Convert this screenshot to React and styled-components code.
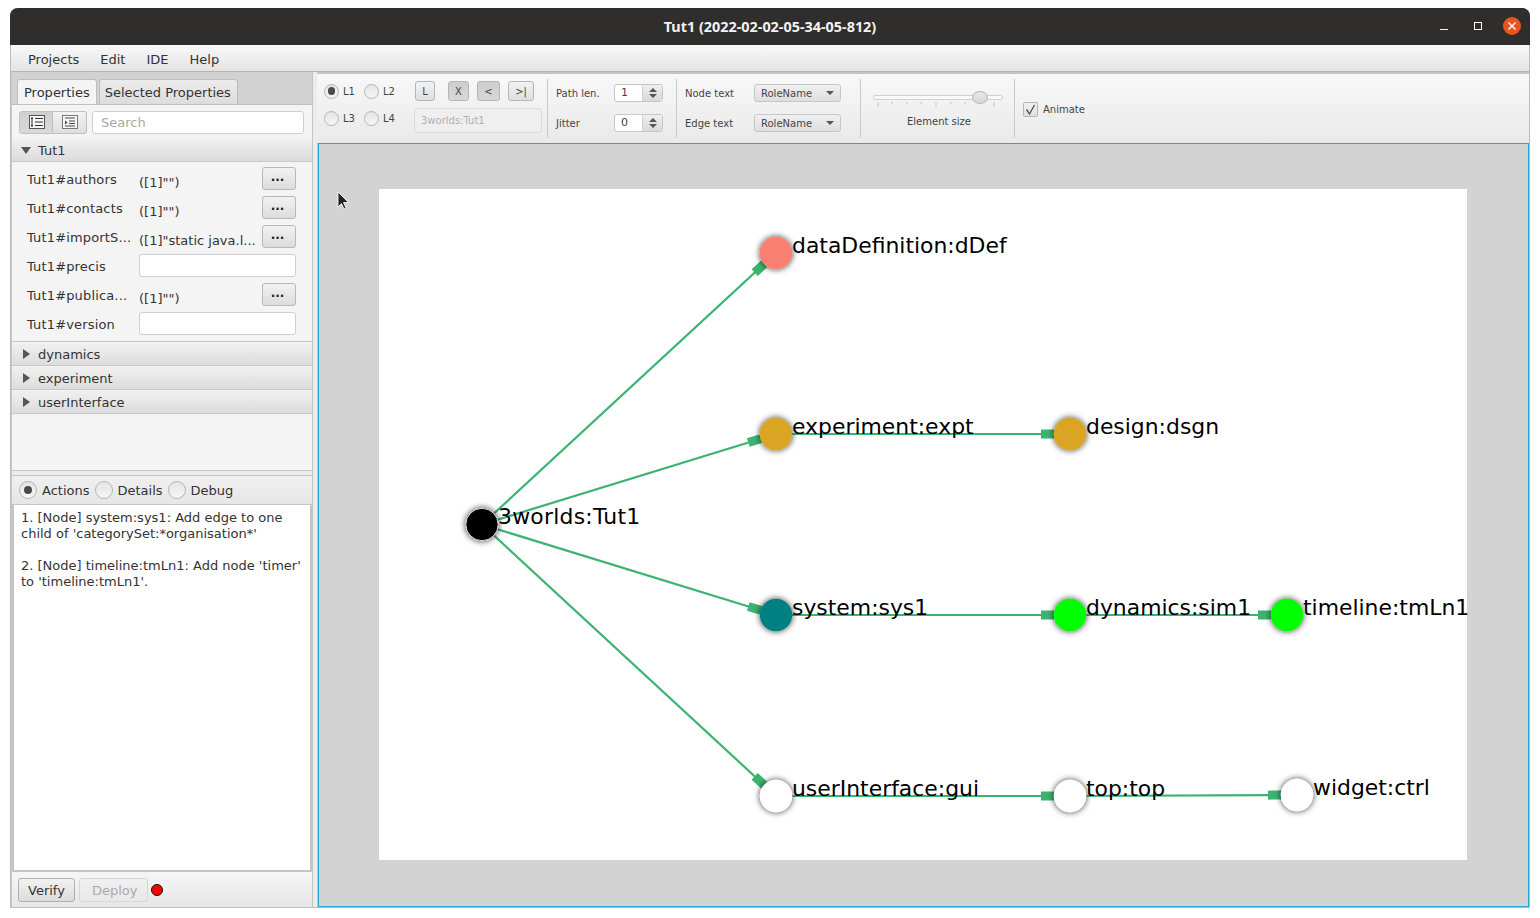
import React from 'react'
import styled, { createGlobalStyle } from 'styled-components'

const GlobalStyle = createGlobalStyle`
  html, body { margin: 0; padding: 0; background: #fff; }
  body { font-family: "DejaVu Sans", sans-serif; font-size: 13px; color: #333; }
`

const Page = styled.div`
  width: 1540px;
  height: 918px;
  padding: 8px 10px 10px;
  box-sizing: border-box;
  overflow: hidden;
`

const Win = styled.div`
  height: 900px;
  display: flex;
  flex-direction: column;
  border-radius: 8px 8px 0 0;
  background: #c8c8c8;
  overflow: hidden;
  box-shadow: inset 0 0 0 1px #bdbdbd;
`

const TitleBar = styled.div`
  height: 37px;
  flex: none;
  position: relative;
  background: #2f2e2d;
  color: #f2f2f2;
  display: flex;
  align-items: center;
  justify-content: center;
  font: 700 14.4px "Noto Sans", sans-serif;
`

const WinControls = styled.div`
  position: absolute;
  right: 9px;
  top: 9px;
  display: flex;
  align-items: center;
  gap: 16px;
`

const WinBtn = styled.span`
  width: 18px;
  height: 18px;
  display: flex;
  align-items: center;
  justify-content: center;
  border-radius: 50%;
  background: ${p => (p.$close ? '#e95420' : 'transparent')};
`

const MenuBar = styled.div`
  height: 27px;
  flex: none;
  margin: 0 1px;
  display: flex;
  align-items: center;
  padding: 2px 0 0 17px;
  gap: 21px;
  background: linear-gradient(#f8f8f8, #e4e4e4);
  border-bottom: 1px solid #b5b5b5;
  box-sizing: border-box;
`

const Body = styled.div`
  flex: 1;
  min-height: 0;
  margin: 0 1px 1px;
  display: flex;
`

const LeftPane = styled.div`
  width: 300px;
  margin-left: 1px;
  flex: none;
  display: flex;
  flex-direction: column;
  background: #f4f4f4;
`

const Divider = styled.div`
  width: 5px;
  flex: none;
  background: #ececec;
  border-left: 1px solid #c4c4c4;
  box-sizing: border-box;
`

const TabStrip = styled.div`
  height: 33px;
  flex: none;
  display: flex;
  align-items: flex-end;
  gap: 2px;
  padding-left: 5px;
  background: #d2d2d2;
  box-sizing: border-box;
  border-bottom: 1px solid #c0c0c0;
`

const Tab = styled.div`
  height: 25px;
  padding: 0 6px 0 ${p => (p.$active ? 6 : 5)}px;
  display: flex;
  align-items: center;
  border: 1px solid #bdbdbd;
  border-bottom: none;
  border-radius: 3px 3px 0 0;
  box-sizing: border-box;
  background: ${p => (p.$active ? '#f4f4f4' : 'linear-gradient(#ececec, #dcdcdc)')};
`

const SheetTools = styled.div`
  height: 34px;
  flex: none;
  display: flex;
  align-items: center;
  padding: 0 8px 0 7px;
  box-sizing: border-box;
`

const ToggleIcon = styled.div`
  width: 34px;
  height: 23px;
  padding-left: 1px;
  display: flex;
  align-items: center;
  justify-content: center;
  border: 1px solid #c0c0c0;
  box-sizing: border-box;
  background: ${p => (p.$on ? 'linear-gradient(#cfcfcf, #dadada)' : 'linear-gradient(#f2f2f2, #dedede)')};
  border-radius: ${p => (p.$on ? '3px 0 0 3px' : '0 3px 3px 0')};
  ${p => (p.$on ? '' : 'border-left: none;')}
`

const SearchBox = styled.div`
  flex: 1;
  height: 23px;
  margin-left: 5px;
  padding-left: 8px;
  display: flex;
  align-items: center;
  color: #a8a8a8;
  background: #fff;
  border: 1px solid #cfcfcf;
  border-radius: 3px;
  box-sizing: border-box;
`

const PaneHeader = styled.div`
  height: 22px;
  margin-bottom: 2px;
  flex: none;
  display: flex;
  align-items: center;
  gap: 9px;
  padding-left: 9px;
  box-sizing: border-box;
  background: linear-gradient(#f0f0f0, #dcdcdc);
  box-shadow: 0 1px 0 #c8c8c8;
`

const Triangle = styled.span`
  width: 0;
  height: 0;
  ${p => (p.$open
    ? 'border-left: 5px solid transparent; border-right: 5px solid transparent; border-top: 7px solid #555; margin-right: -2px;'
    : 'border-top: 5px solid transparent; border-bottom: 5px solid transparent; border-left: 7px solid #555; margin: 0 -1px 0 2px;')}
`

const PropRows = styled.div`
  flex: none;
  height: 179px;
  box-sizing: border-box;
  padding: 4px 16px 0 15px;
  margin-bottom: 1px;
  display: flex;
  flex-direction: column;
  gap: 6px;
  border-bottom: 1px solid #c6c6c6;
`

const PropRow = styled.div`
  height: 23px;
  flex: none;
  display: grid;
  grid-template-columns: 112px 1fr 34px;
  align-items: center;
`

const PropName = styled.span`
  position: relative;
  top: 1px;
  white-space: nowrap;
  letter-spacing: 0.15px;
`

const PropValue = styled.span`
  position: relative;
  top: 4px;
  white-space: nowrap;
`

const DotsButton = styled.div`
  width: 34px;
  height: 23px;
  display: flex;
  align-items: center;
  justify-content: center;
  padding: 0 3px 4px 0;
  box-sizing: border-box;
  font-weight: 700;
  font-size: 12px;
  color: #222;
  border: 1px solid #b8b8b8;
  border-radius: 3px;
  background: linear-gradient(#f2f2f2, #dcdcdc);
`

const BlankField = styled.div`
  grid-column: 2 / 4;
  height: 23px;
  background: #fff;
  border: 1px solid #cfcfcf;
  border-radius: 3px;
  box-sizing: border-box;
`

const Spare = styled.div`
  flex: 1;
  min-height: 0;
  border-bottom: 1px solid #c6c6c6;
`

const HSplit = styled.div`
  height: 5px;
  flex: none;
  background: #ececec;
  border-bottom: 1px solid #c6c6c6;
  box-sizing: border-box;
`

const ModeBar = styled.div`
  height: 28px;
  flex: none;
  display: flex;
  align-items: center;
  padding-left: 7px;
  box-sizing: border-box;
  background: linear-gradient(#f0f0f0, #e6e6e6);
`

const Radio = styled.span`
  flex: none;
  width: ${p => p.$size || 15}px;
  height: ${p => p.$size || 15}px;
  border-radius: 50%;
  border: 1px solid #b5b5b5;
  box-sizing: border-box;
  display: flex;
  align-items: center;
  justify-content: center;
  background: linear-gradient(#e4e4e4, #f6f6f6);
  &::after {
    content: '';
    display: ${p => (p.$on ? 'block' : 'none')};
    width: 55%;
    height: 55%;
    border-radius: 50%;
    background: #4a4a4a;
  }
`

const ModeOption = styled.label`
  display: flex;
  align-items: center;
  gap: 5px;
  margin-right: 5px;
`

const LogArea = styled.div`
  height: 368px;
  flex: none;
  padding: 5px 4px 0 7px;
  line-height: 16px;
  background: #fff;
  border: 2px solid #c4c4c4;
  border-top: 1px solid #c4c4c4;
  box-sizing: border-box;
  color: #333;
`

const LogEntry = styled.p`
  margin: 0 0 16px;
`

const BottomBar = styled.div`
  height: 35px;
  flex: none;
  display: flex;
  align-items: center;
  gap: 4px;
  padding: 1px 0 0 6px;
  box-sizing: border-box;
  background: linear-gradient(#f6f6f6, #e6e6e6);
`

const PlainButton = styled.div`
  height: 24px;
  display: flex;
  align-items: center;
  box-sizing: border-box;
  border-radius: 3px;
  border: 1px solid ${p => (p.$off ? '#d6d6d6' : '#b0b0b0')};
  color: ${p => (p.$off ? '#a9a9a9' : '#333')};
  padding: ${p => (p.$off ? '0 10px 0 12px' : '0 9px')};
  background: ${p => (p.$off ? 'linear-gradient(#f0f0f0, #e8e8e8)' : 'linear-gradient(#f2f2f2, #dcdcdc)')};
`

const StatusDot = styled.span`
  width: 12px;
  height: 12px;
  margin-left: -1px;
  border-radius: 50%;
  background: #f00;
  border: 1px solid #111;
  box-sizing: border-box;
`

const RightPane = styled.div`
  flex: 1;
  min-width: 0;
  display: flex;
  flex-direction: column;
`

const ToolBar = styled.div`
  height: 71px;
  flex: none;
  display: flex;
  font-size: 10px;
  color: #444;
  background: linear-gradient(#f8f8f8, #e9e9e9);
  border-top: 2px solid #c4c4c4;
  box-sizing: border-box;
  padding-top: 5px;
`

const Group = styled.div`
  width: ${p => p.$w}px;
  height: 59px;
  flex: none;
  box-sizing: border-box;
  border-right: ${p => (p.$last ? 'none' : '1px solid #c9c9c9')};
  padding-left: ${p => p.$pad || 0}px;
`

const LevelGroup = styled(Group)`
  display: grid;
  grid-template-columns: 40px 50px 1fr;
  grid-template-rows: 20px 25px;
  row-gap: 7px;
  padding-top: 2px;
  align-items: center;
`

const LevelOption = styled.div`
  display: flex;
  align-items: center;
  gap: 4px;
  ${p => (p.$low ? 'align-self: start; margin-top: 3px;' : '')}
`

const NavCell = styled.div`
  display: flex;
  align-items: center;
  height: 20px;
  padding-left: 1px;
`

const NavButton = styled.div`
  width: ${p => p.$w}px;
  height: 20px;
  margin-left: ${p => p.$gap || 0}px;
  display: flex;
  align-items: center;
  justify-content: center;
  box-sizing: border-box;
  font-size: 10px;
  color: #444;
  border: 1px solid #b5b5b5;
  border-radius: 3px;
  background: ${p => (p.$down ? 'linear-gradient(#cdcdcd, #d8d8d8)' : 'linear-gradient(#f2f2f2, #dfdfdf)')};
`

const RootField = styled.div`
  width: 128px;
  height: 25px;
  padding-left: 6px;
  display: flex;
  align-items: center;
  box-sizing: border-box;
  font-size: 10px;
  color: #b0b0b0;
  background: #efefef;
  border: 1px solid #dcdcdc;
  border-radius: 3px;
`

const FormGrid = styled.div`
  display: grid;
  grid-template-columns: ${p => p.$cols};
  grid-template-rows: 30px 30px;
  align-items: center;
  height: 59px;
  position: relative;
  top: -1px;
`

const SpinBox = styled.div`
  width: 49px;
  height: 18px;
  display: flex;
  box-sizing: border-box;
  border: 1px solid #c6c6c6;
  border-radius: 3px;
  overflow: hidden;
  background: #fff;
`

const SpinValue = styled.span`
  flex: 1;
  padding-left: 6px;
  line-height: 16px;
  font-size: 11px;
`

const SpinArrows = styled.span`
  width: 20px;
  display: flex;
  flex-direction: column;
  align-items: center;
  justify-content: space-around;
  padding: 2px 0;
  box-sizing: border-box;
  background: linear-gradient(#eee, #d9d9d9);
  border-left: 1px solid #d0d0d0;
`

const Caret = styled.i`
  width: 0;
  height: 0;
  border-left: 4px solid transparent;
  border-right: 4px solid transparent;
  ${p => (p.$up ? 'border-bottom: 4px solid #555;' : 'border-top: 4px solid #555;')}
`

const ComboBox = styled.div`
  width: 87px;
  height: 18px;
  padding: 0 6px;
  display: flex;
  align-items: center;
  justify-content: space-between;
  box-sizing: border-box;
  font-size: 10px;
  border: 1px solid #c6c6c6;
  border-radius: 3px;
  background: linear-gradient(#f0f0f0, #dedede);
`

const SliderWrap = styled.div`
  display: flex;
  flex-direction: column;
  align-items: center;
  padding-top: 16px;
  height: 100%;
  box-sizing: border-box;
`

const SliderTrack = styled.div`
  width: 130px;
  height: 5px;
  position: relative;
  border: 1px solid #cfcfcf;
  border-radius: 3px;
  background: #fafafa;
  box-sizing: border-box;
`

const SliderThumb = styled.span`
  position: absolute;
  left: 98px;
  top: -5px;
  width: 16px;
  height: 13px;
  border-radius: 50%;
  border: 1px solid #b5b5b5;
  box-sizing: border-box;
  background: linear-gradient(#e8e8e8, #d6d6d6);
`

const Ticks = styled.svg`
  display: block;
  margin-top: 2px;
`

const SliderLabel = styled.span`
  margin: 9px 0 0 3px;
`

const AnimateRow = styled.div`
  display: flex;
  align-items: center;
  gap: 5px;
  height: 100%;
  padding: 2px 0 0 8px;
  box-sizing: border-box;
`

const CheckBox = styled.span`
  width: 15px;
  height: 15px;
  display: flex;
  align-items: center;
  justify-content: center;
  box-sizing: border-box;
  border: 1px solid #b5b5b5;
  border-radius: 2px;
  background: linear-gradient(#f0f0f0, #e0e0e0);
`

const Canvas = styled.div`
  flex: 1;
  min-height: 0;
  position: relative;
  margin-left: 1px;
  padding: 45px 62px 0 60px;
  background: #d3d3d3;
  border: 1px solid #2ba3d0;
  box-sizing: border-box;
`

const Sheet = styled.div`
  width: 1088px;
  height: 671px;
  background: #fff;
`

const GraphSvg = styled.svg`
  display: block;
  overflow: visible;
`

const NodeLabel = styled.text`
  font-family: "DejaVu Sans", sans-serif;
  font-size: 21.9px;
  fill: #000;
`

const Cursor = styled.svg`
  position: absolute;
  left: 18px;
  top: 47px;
`

const labelRows = [
  { name: 'Tut1#authors', value: '([1]"")', more: true },
  { name: 'Tut1#contacts', value: '([1]"")', more: true },
  { name: 'Tut1#importS...', value: '([1]"static java.l...', more: true },
  { name: 'Tut1#precis' },
  { name: 'Tut1#publica...', value: '([1]"")', more: true },
  { name: 'Tut1#version' },
]

// positions on the white sheet
const nodes = {
  root: { x: 103, y: 335.5, fill: '#000', label: '3worlds:Tut1', spacing: 0.25, ring: '#ddd' },
  dDef: { x: 397, y: 64, fill: '#fa8072', label: 'dataDefinition:dDef' },
  expt: { x: 397, y: 245, fill: '#daa520', label: 'experiment:expt' },
  dsgn: { x: 691, y: 245, fill: '#daa520', label: 'design:dsgn' },
  sys1: { x: 397, y: 426, fill: '#008080', label: 'system:sys1' },
  sim1: { x: 691, y: 426, fill: '#00ff00', label: 'dynamics:sim1' },
  tmLn1: { x: 908, y: 426, fill: '#00ff00', label: 'timeline:tmLn1' },
  gui: { x: 397, y: 607, fill: '#fff', label: 'userInterface:gui' },
  top: { x: 691, y: 607, fill: '#fff', label: 'top:top' },
  ctrl: { x: 918, y: 606, fill: '#fff', label: 'widget:ctrl' },
}

const edges = [
  ['root', 'dDef'], ['root', 'expt'], ['root', 'sys1'], ['root', 'gui'],
  ['expt', 'dsgn'], ['sys1', 'sim1'], ['sim1', 'tmLn1'], ['gui', 'top'], ['top', 'ctrl'],
]

const Edge = ({ from, to }) => {
  const a = nodes[from]
  const b = nodes[to]
  const angle = Math.atan2(b.y - a.y, b.x - a.x) * 180 / Math.PI
  const len = Math.hypot(b.x - a.x, b.y - a.y)
  return (
    <g transform={`translate(${a.x} ${a.y}) rotate(${angle})`}>
      <line x1="0" y1="0" x2={len - 16} y2="0" stroke="#3cb371" strokeWidth="2.2" />
      <rect x={len - 29} y="-4.5" width="13" height="9" fill="#3cb371" />
    </g>
  )
}

const App = () => (
  <Page>
    <GlobalStyle />
    <Win>
      <TitleBar>
        Tut1 (2022-02-02-05-34-05-812)
        <WinControls>
          <WinBtn>
            <svg width="10" height="10" viewBox="0 0 10 10"><path d="M1 8.5h8" stroke="#eee" strokeWidth="1" /></svg>
          </WinBtn>
          <WinBtn>
            <svg width="10" height="10" viewBox="0 0 10 10"><rect x="1.5" y="1.5" width="7" height="7" fill="none" stroke="#fff" strokeWidth="1" /></svg>
          </WinBtn>
          <WinBtn $close>
            <svg width="10" height="10" viewBox="0 0 10 10"><path d="M1.5 1.5l7 7M8.5 1.5l-7 7" stroke="#fff" strokeWidth="1.4" /></svg>
          </WinBtn>
        </WinControls>
      </TitleBar>
      <MenuBar>
        <span>Projects</span>
        <span>Edit</span>
        <span>IDE</span>
        <span>Help</span>
      </MenuBar>
      <Body>
        <LeftPane>
          <TabStrip>
            <Tab $active>Properties</Tab>
            <Tab>Selected Properties</Tab>
          </TabStrip>
          <SheetTools>
            <ToggleIcon $on>
              <svg width="16" height="14" viewBox="0 0 16 14">
                <rect x="0.5" y="0.5" width="15" height="13" fill="#f7f7f7" stroke="#555" />
                <path d="M3 2v10M2 3.5h2M2 10.5h2M6 3.5h8M6 7h8M6 10.5h8" stroke="#333" fill="none" />
              </svg>
            </ToggleIcon>
            <ToggleIcon>
              <svg width="16" height="14" viewBox="0 0 16 14">
                <rect x="0.5" y="0.5" width="15" height="13" fill="#f7f7f7" stroke="#777" />
                <path d="M3 3h10M7 6h6M7 8.500h6M3 11h10" stroke="#444" fill="none" />
                <path d="M3 5.500l2.500 2-2.500 2z" fill="#444" />
              </svg>
            </ToggleIcon>
            <SearchBox>Search</SearchBox>
          </SheetTools>
          <PaneHeader><Triangle $open />Tut1</PaneHeader>
          <PropRows>
            {labelRows.map(row => (
              <PropRow key={row.name}>
                <PropName>{row.name}</PropName>
                {row.more ? (
                  <>
                    <PropValue>{row.value}</PropValue>
                    <DotsButton>...</DotsButton>
                  </>
                ) : <BlankField />}
              </PropRow>
            ))}
          </PropRows>
          <PaneHeader><Triangle />dynamics</PaneHeader>
          <PaneHeader><Triangle />experiment</PaneHeader>
          <PaneHeader><Triangle />userInterface</PaneHeader>
          <Spare />
          <HSplit />
          <ModeBar>
            <ModeOption><Radio $size={18} $on />Actions</ModeOption>
            <ModeOption><Radio $size={18} />Details</ModeOption>
            <ModeOption><Radio $size={18} />Debug</ModeOption>
          </ModeBar>
          <LogArea>
            <LogEntry>1. [Node] system:sys1: Add edge to one child of 'categorySet:*organisation*'</LogEntry>
            <LogEntry>2. [Node] timeline:tmLn1: Add node 'timer' to 'timeline:tmLn1'.</LogEntry>
          </LogArea>
          <BottomBar>
            <PlainButton>Verify</PlainButton>
            <PlainButton $off>Deploy</PlainButton>
            <StatusDot />
          </BottomBar>
        </LeftPane>
        <Divider />
        <RightPane>
          <ToolBar>
            <LevelGroup $w={231} $pad={7}>
              <LevelOption><Radio $on />L1</LevelOption>
              <LevelOption><Radio />L2</LevelOption>
              <NavCell>
                <NavButton $w={20}>L</NavButton>
                <NavButton $w={21} $gap={13} $down>X</NavButton>
                <NavButton $w={23} $gap={8} $down>&lt;</NavButton>
                <NavButton $w={26} $gap={8}>&gt;|</NavButton>
              </NavCell>
              <LevelOption $low><Radio />L3</LevelOption>
              <LevelOption $low><Radio />L4</LevelOption>
              <RootField>3worlds:Tut1</RootField>
            </LevelGroup>
            <Group $w={129} $pad={8}>
              <FormGrid $cols="58px 1fr">
                <span>Path len.</span>
                <SpinBox><SpinValue>1</SpinValue><SpinArrows><Caret $up /><Caret /></SpinArrows></SpinBox>
                <span>Jitter</span>
                <SpinBox><SpinValue>0</SpinValue><SpinArrows><Caret $up /><Caret /></SpinArrows></SpinBox>
              </FormGrid>
            </Group>
            <Group $w={184} $pad={8}>
              <FormGrid $cols="69px 1fr">
                <span>Node text</span>
                <ComboBox>RoleName<Caret /></ComboBox>
                <span>Edge text</span>
                <ComboBox>RoleName<Caret /></ComboBox>
              </FormGrid>
            </Group>
            <Group $w={154}>
              <SliderWrap>
                <SliderTrack><SliderThumb /></SliderTrack>
                <Ticks width="122" height="5" viewBox="0 0 122 5">
                  <path d="M1 0v5M15 0v2M30 0v2M44 0v2M59 0v5M74 0v2M88 0v2M103 0v2M117 0v5" stroke="#c4c4c4" />
                </Ticks>
                <SliderLabel>Element size</SliderLabel>
              </SliderWrap>
            </Group>
            <Group $w={200} $last>
              <AnimateRow>
                <CheckBox>
                  <svg width="13" height="13" viewBox="0 0 13 13"><path d="M2.500 6.500l3 4.500 5-9" fill="none" stroke="#555" strokeWidth="1.4" /></svg>
                </CheckBox>
                Animate
              </AnimateRow>
            </Group>
          </ToolBar>
          <Canvas>
            <Sheet>
              <GraphSvg width="1088" height="671" viewBox="0 0 1088 671">
                <defs>
                  <filter id="glow" x="-50%" y="-50%" width="200%" height="200%">
                    <feDropShadow dx="0" dy="0" stdDeviation="3" floodColor="#000" floodOpacity="0.8" />
                  </filter>
                </defs>
                {edges.map(([from, to]) => <Edge key={to} from={from} to={to} />)}
                {Object.entries(nodes).map(([id, n]) => (
                  <g key={id}>
                    <circle cx={n.x} cy={n.y} r="16.2" fill={n.fill} stroke={n.ring} filter="url(#glow)" />
                    <NodeLabel x={n.x + 16} y={Math.floor(n.y) - 0.5} letterSpacing={n.spacing}>{n.label}</NodeLabel>
                  </g>
                ))}
              </GraphSvg>
            </Sheet>
            <Cursor width="14" height="20" viewBox="0 0 14 20">
              <path d="M1 1v15l3.500-3.500 2.500 5.500 2-1-2.500-5.500h5z" fill="#222" stroke="#fff" strokeWidth="0.8" />
            </Cursor>
          </Canvas>
        </RightPane>
      </Body>
    </Win>
  </Page>
)

export default App
